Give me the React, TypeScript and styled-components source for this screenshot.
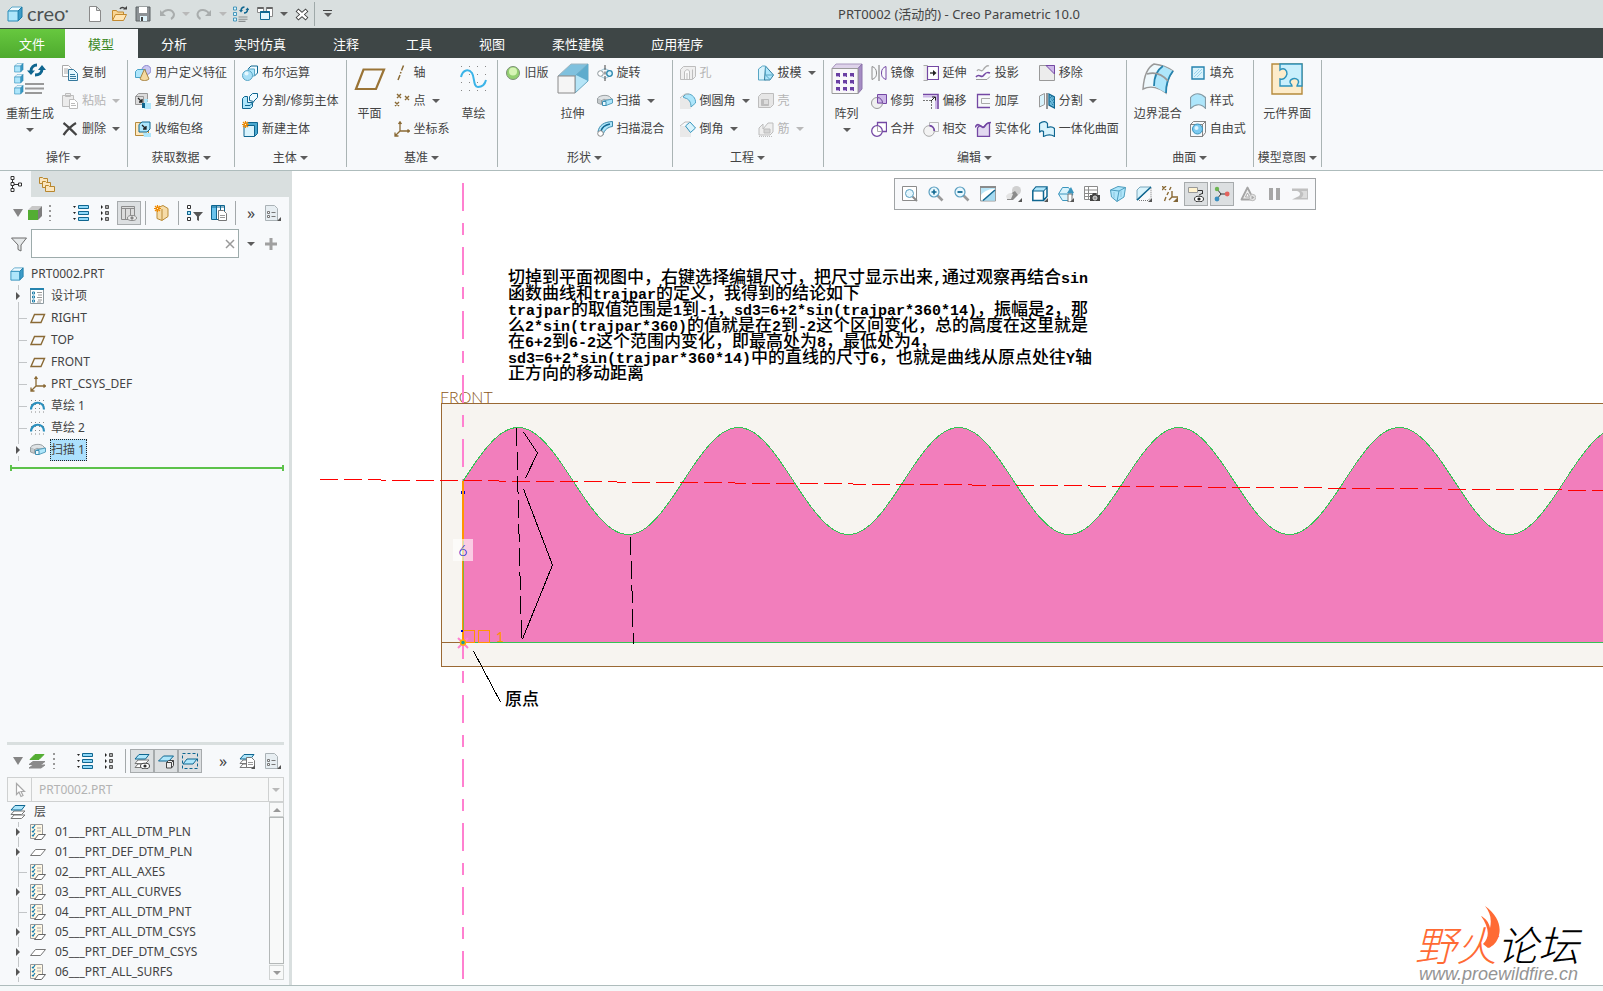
import React from 'react';
import styled, { createGlobalStyle } from 'styled-components';

const uiFont = '"Noto Sans", "Noto Sans CJK SC", sans-serif';
const c = {
  text: '#434343',
  muted: '#b4b4b4',
  frame: '#d9dfdf',
  panel: '#f7f9fb',
  line: '#aebcbc',
  navy: '#0f6690',
  sky: '#aee6fb',
  pale: '#d9f3fc',
  grey: '#8c8c8c',
  brown: '#8a6a35',
  purple: '#7448a4',
  lilac: '#cdb8e8',
};

const GlobalStyle = createGlobalStyle`
  * { box-sizing: border-box; }
  body { margin: 0; font: 12px/16px ${uiFont}; color: ${c.text}; overflow: hidden; }
  button, input, select { font: inherit; color: inherit; }
  button { background: none; border: 0; padding: 0; margin: 0; white-space: nowrap; }
  ul { list-style: none; margin: 0; padding: 0; }
  svg { display: block; flex: none; }
`;

/* ---------- icons ---------- */

const Corner = () => <path d="M16 12v4h-4z" fill="#555" />;

const Box = ({ x = 0, y = 0, s = 1 }: { x?: number; y?: number; s?: number }) => (
  <g transform={`translate(${x} ${y}) scale(${s})`} strokeLinejoin="round">
    <path d="M1 5l4-4h10l-4 4z" fill="#eefaff" stroke="#5aa6c8" />
    <path d="M11 5l4-4v10l-4 4z" fill="#3d9cc8" stroke="#1b7aa6" />
    <path d="M1 5h10v10H1z" fill={c.sky} stroke="#2a8cb8" />
  </g>
);

const Layers = ({ top = c.sky, edge = c.navy, low = '#777' }: { top?: string; edge?: string; low?: string }) => (
  <g strokeLinejoin="round">
    <path d="M1 14.500l3-3.500h11l-3.500 3.500z" fill="#fff" stroke={low} />
    <path d="M1 10.500l3-3.500h11l-3.500 3.500z" fill="#fff" stroke={low} />
    <path d="M1 6l4-4.500h10L11.500 6z" fill={top} stroke={edge} />
  </g>
);

const Page = ({ x = 0, y = 0 }: { x?: number; y?: number }) => (
  <g transform={`translate(${x} ${y})`}>
    <path d="M.5.500h5l3 3v7h-8z" fill="#fff" stroke="#777" />
    <path d="M2 5.500h5M2 7.500h5" stroke="#999" />
  </g>
);

const Sparkle = () => (
  <g stroke="#f08a00" strokeWidth="1.200">
    <path d="M3.500 0v7M0 3.500h7M1 1l5 5M6 1L1 6" />
    <circle cx="3.500" cy="3.500" r="1.200" fill="#fff" />
  </g>
);

const Lens = ({ children }: { children?: React.ReactNode }) => (
  <g>
    <path d="M9.500 9.500l5 5" stroke="#9a9a9a" strokeWidth="2.600" />
    <circle cx="6" cy="6" r="5" fill="#e9f8fe" stroke="#5b9fc0" strokeWidth="1.200" />
    {children}
  </g>
);

const icons: Record<string, React.ReactNode> = {
  app: <Box />,
  blank: <path d="M2.500.500h7l4 4v11h-11zM9.500.500v4h4" fill="#fff" stroke="#8a8a8a" />,
  open: (
    <g>
      <path d="M1.500 14V4.500h4l1 1.500h6v3" fill="#f9d593" stroke="#c28a30" />
      <path d="M1.500 14.500l3-6h11l-3 6z" fill="#ffe5b4" stroke="#c28a30" />
      <path d="M9 3c1-2 4-2 5 0" fill="none" stroke="#444" strokeWidth="1.400" />
      <path d="M12 3.500h4V0z" fill="#444" />
    </g>
  ),
  save: (
    <g>
      <path d="M1 1h14v14H1z" fill="#8d9296" stroke="#5d6265" />
      <path d="M4 1h8v6H4z" fill="#fff" />
      <path d="M5 10h7v5H5z" fill="#ddf3fb" />
      <path d="M6 11h2v4H6z" fill="#444" />
    </g>
  ),
  undo: (
    <g fill="none" stroke="#a9adad" strokeWidth="2">
      <path d="M2 9c3-6 11-7 13-1 0 3-1 4-3 5" />
      <path d="M1 4v6h6z" fill="#a9adad" stroke="none" />
    </g>
  ),
  redo: (
    <g fill="none" stroke="#a9adad" strokeWidth="2">
      <path d="M14 9C11 3 3 2 1.500 8c0 3 1 4 3 5" />
      <path d="M15 4v6H9z" fill="#a9adad" stroke="none" />
    </g>
  ),
  regen: (
    <g>
      <g fill={c.pale} stroke="#2583ae" strokeWidth=".8">
        <path d="M.5 1h3v3h-3zM.5 6.500h3v3h-3zM.5 12h3v3h-3z" />
      </g>
      <path d="M5.500 11h9M5.500 13.200h9M5.500 15.400h7" stroke="#8a8f90" strokeWidth="1.100" />
      <path d="M8 4.200C8.300 2 10 1 11.500 1M14.500 4c-.2 2-1.800 3-3.500 3" fill="none" stroke={c.navy} strokeWidth="1.500" />
      <path d="M6 4h4L8 6.500zM12.500 4h4l-2-2.500z" fill={c.navy} />
    </g>
  ),
  windows: (
    <g>
      <path d="M.5 1.500h6v5h-6zM9.500 1.500h6v9h-6z" fill="#fff" stroke="#888" />
      <path d="M.5 2h6M9.500 2h6" stroke="#666" strokeWidth="2" />
      <path d="M3.500 5.500h9v8h-9z" fill="#e3f5fd" stroke={c.navy} />
      <path d="M3.500 6h9" stroke={c.navy} strokeWidth="2" />
    </g>
  ),
  closeWin: (
    <g fill="none">
      <path d="M3 4l10 9M13 4L3 13" stroke="#3f3f3f" strokeWidth="4.200" />
      <path d="M3.600 4.600l8.800 7.800M12.400 4.600l-8.800 7.800" stroke="#fff" strokeWidth="2.400" />
    </g>
  ),
  copy: (
    <g>
      <path d="M.5.500h6l3 3v8h-9zM2 4h4M2 6h4M2 8h4" fill="#fff" stroke="#aaa" />
      <path d="M6.500 4.500h5l4 4v7h-9z" fill="#e5f7fe" stroke="#34789c" />
      <path d="M8 9.500h5M8 11.500h6M8 13.500h6" stroke="#34789c" />
    </g>
  ),
  paste: (
    <g stroke="#bcbcbc">
      <path d="M.5 2.500h11v11H.5zM3.500.500h5v3h-5z" fill="#ececec" />
      <path d="M7.500 6.500h5l3 3v6h-8zM9 10.500h4M9 12.500h5" fill="#fff" />
    </g>
  ),
  del: <path d="M1.500 2c4 3 8 7 13 12M14 2C9 5 5 9 1.500 14" fill="none" stroke="#444" strokeWidth="2.200" />,
  udf: (
    <g>
      <circle cx="11.500" cy="5" r="4.500" fill="#c9c6f2" stroke="#8d88cd" />
      <path d="M.5 6.500l2-2h8v6l-2 2h-8z" fill={c.sky} stroke="#4aa3c8" />
      <path d="M9.500 4l4.500 10c-2 2-7 2-9 0z" fill="#f5d9a0" stroke="#a88544" />
    </g>
  ),
  copyGeom: (
    <g>
      <path d="M.5 3.500l3-3h9v8l-3 3h-9z" fill="#dcdcdc" stroke="#999" />
      <path d="M.5 3.500h8v11" fill="none" stroke="#999" />
      <path d="M3 5l4 4M7 6v3H4" fill="none" stroke="#222" strokeWidth="1.300" />
      <path d="M9 6h4l-1 4h4v6h-7l1-4z" fill={c.sky} />
      <path d="M7 10h3v5H7z" fill={c.navy} />
    </g>
  ),
  shrink: (
    <g>
      <path d="M.5 1.500h13v13H.5z" fill="#ffe9bf" stroke="#b58a3d" />
      <path d="M4 3.500l3-2.500h8v7l-3 3H4z" fill={c.sky} stroke={c.navy} />
      <path d="M7 4l4 4M11 5v3H8" fill="none" stroke="#222" strokeWidth="1.300" />
      <path d="M8 12h8v4H9z" fill={c.sky} />
    </g>
  ),
  boolean: (
    <g>
      <path d="M6 4l3-3h6.500v7l-3 3" fill="#eefaff" stroke={c.navy} />
      <path d="M6 4h6.500v7H6z" fill={c.sky} stroke="#58a6c6" />
      <circle cx="5.500" cy="10.500" r="5" fill="#a8dff6" stroke="#58a6c6" />
      <circle cx="4.500" cy="8.500" r="2" fill="#e6f8fe" />
    </g>
  ),
  splitBody: (
    <g stroke={c.navy} strokeLinejoin="round">
      <path d="M.5 5.500l2-2h3v6h5v4l-2 2h-8z" fill={c.sky} />
      <path d="M7.500 7.500v-4l3-3h5v4l-4 4z" fill="#eefaff" />
      <path d="M3 12.500h5l4-4" fill="none" />
    </g>
  ),
  newBody: (
    <g>
      <path d="M2 4.500l3-3h10.500v11l-3 3" fill="#4ba8cf" stroke={c.navy} />
      <path d="M2 4.500h10.500v11H2z" fill="#d9f3fc" stroke={c.navy} />
      <Sparkle />
    </g>
  ),
  plane: <path d="M4.500 4.500h10l-3.500 8H1z" fill="none" stroke={c.brown} strokeWidth="1.400" />,
  axis: <path d="M9.500.500l-2 5M7 7l-.6 1.500M6 10l-2 5" stroke={c.brown} strokeWidth="1.500" />,
  points: <path d="M3 1l4 4M7 1L3 5M11 3l4 4M15 3l-4 4M1 9l4 4M5 9l-4 4" stroke={c.brown} strokeWidth="1.400" />,
  csys: (
    <g fill="none" stroke={c.brown} strokeWidth="1.300">
      <path d="M6 1v9h9M6 10l-4.500 4.500M4.500 3L6 .8 7.500 3M13.500 8.500l2 1.500-2 1.500M1 11.500V15h3.500" />
    </g>
  ),
  legacy: (
    <g>
      <circle cx="8" cy="8" r="6.500" fill="#93d070" stroke="#7d8f77" />
      <circle cx="8" cy="6.500" r="4" fill="#d6f4b5" />
    </g>
  ),
  revolve: (
    <g>
      <circle cx="3.500" cy="8.500" r="2.800" fill="#fff" stroke="#8b9599" />
      <path d="M4 5.500l4-2 4 2M4 11.500l4 2 4-2" fill="none" stroke="#9cc4d6" />
      <circle cx="12.500" cy="8.500" r="2.800" fill={c.pale} stroke="#2b87ad" strokeWidth="1.300" />
      <path d="M8 0v5M8 6.500v3M8 11v5" stroke="#444" />
    </g>
  ),
  sweep: (
    <g strokeLinejoin="round">
      <path d="M.5 6c0-3 8-5 12-2.500L15 6l-5 1c-2-1-5-1-5 1z" fill="#dfe3e5" stroke="#9aa0a3" />
      <path d="M.5 6v4l4 1.500V7" fill="#c5cacc" stroke="#9aa0a3" />
      <path d="M6 8l9.500-2v4L9 12.500z" fill={c.sky} stroke="#57a0be" />
      <path d="M5.500 8.500H9v4H5.500z" fill="#ecf9fe" stroke="#3d8fb3" />
    </g>
  ),
  sweepBlend: (
    <g>
      <path d="M1 11C2 4 7 1 15.500.500v5C11 6 7 9 6 14z" fill={c.sky} stroke="#3a89ab" />
      <path d="M4 10c1-4 4-6 9-7" fill="none" stroke={c.navy} strokeWidth="1.500" />
      <circle cx="3.500" cy="12.500" r="2.800" fill="#fff" stroke="#888" />
    </g>
  ),
  hole: (
    <g stroke="#bdbdbd">
      <path d="M.5 4.500l3-3h12v10l-3 3H.5z" fill="#efefef" />
      <path d="M4.500 14V7c1-3 5-3 5 0v7M7 14V8M12.500 14V4.500" fill="#fafafa" />
    </g>
  ),
  round: (
    <g>
      <path d="M0 5h11v11H0z" fill="#e9e9e9" />
      <path d="M5 2c1-1 2-1 3-1 4 0 8 4 7.500 9L11 14c0-5-2-8-6-9L3 4z" fill={c.sky} stroke="#54a4c4" />
      <path d="M0 5l5-4h4" fill="none" stroke="#bbb" />
    </g>
  ),
  chamfer: (
    <g>
      <path d="M0 5h11v11H0z" fill="#e9e9e9" />
      <path d="M5.500 5L10 1l5.500 6-5 4.500z" fill={c.pale} stroke="#3294bd" />
      <path d="M0 5l5-4h5" fill="none" stroke="#bbb" />
    </g>
  ),
  draft: (
    <g stroke="#58a6c4">
      <path d="M.5 4l4-3h3v14H.5z" fill={c.pale} />
      <path d="M7.500 1l8 9-3.500 5H6.500z" fill={c.sky} stroke="#347f9f" />
      <path d="M7.500 1v9l5 5M7.500 10h8" fill="none" />
    </g>
  ),
  shell: (
    <g stroke="#bdbdbd">
      <path d="M.5 3.500l3-3h12v11l-3 3H.5z" fill="#e6e6e6" />
      <path d="M3.500 6.500h7v6h-7z" fill="#bdbdbd" />
      <path d="M6 7h4v4H6z" fill="#ddd" stroke="none" />
    </g>
  ),
  rib: (
    <g stroke="#bdbdbd">
      <path d="M1 14V7l4-4v5l5-6h5v9l-3 3z" fill="#efefef" />
      <path d="M6 8h6v4H6z" fill="#d4d4d4" />
      <path d="M1 15.500h13" strokeDasharray="1 1" />
    </g>
  ),
  mirror: (
    <g fill="none">
      <path d="M1 14.500V1.500c3 1 4.500 3 4.500 6.500s-1 5-4.500 6.500z" stroke="#8c8c8c" />
      <path d="M8 0v16" stroke="#777" />
      <path d="M15 14.500V1.500c-3 1-4.500 3-4.500 6.500s1 5 4.500 6.500z" stroke={c.purple} />
    </g>
  ),
  trim: (
    <g>
      <path d="M6.500 1.500h9v9h-9z" fill={c.lilac} stroke={c.purple} />
      <circle cx="6" cy="10" r="5.500" fill="#eee" fillOpacity=".8" stroke="#999" />
      <path d="M6.500 4.500a5.500 5.500 0 015 5.500h-5z" fill={c.lilac} stroke={c.purple} />
    </g>
  ),
  merge: (
    <g fill="#fff">
      <path d="M6.500 1.500h9v9h-9z" stroke={c.purple} strokeWidth="1.300" />
      <circle cx="6" cy="10" r="5.300" stroke={c.purple} strokeWidth="1.300" />
      <path d="M6.500 5v5.500H11" fill="none" stroke="#aaa" />
    </g>
  ),
  extend: (
    <g>
      <path d="M.5.500h4v15h-4" fill="#eee" stroke="#aaa" />
      <path d="M4.500 1.500h11v13h-11z" fill="#fff" stroke={c.purple} strokeWidth="1.200" />
      <path d="M7 8h4" stroke="#222" strokeWidth="1.300" />
      <path d="M10 5v6l3.500-3z" fill="#222" />
    </g>
  ),
  offset: (
    <g>
      <path d="M0 1.500h15V16" fill="none" stroke={c.purple} strokeWidth="1.600" />
      <path d="M0 3.500h13V16" fill="none" stroke={c.lilac} strokeWidth="2" />
      <path d="M0 7.500h8.500V16" fill="none" stroke="#777" strokeDasharray="2 1" />
      <path d="M8 8l4-4M9 4h3.500v3.500" fill="none" stroke="#222" />
    </g>
  ),
  intersect: (
    <g fill="none">
      <path d="M6.500 1.500h9v9h-9z" stroke="#bbb" />
      <circle cx="6" cy="10" r="5.300" fill="#f3f3f3" stroke="#aaa" />
      <path d="M6.500 4.700A5.300 5.300 0 0111.300 10" stroke={c.purple} strokeWidth="1.800" />
    </g>
  ),
  project: (
    <g fill="none">
      <path d="M2 6c2-4 4 2 6-1s4-5 6-4" stroke="#aaa" strokeWidth="1.300" />
      <path d="M1 12c3-4 5 1 7-1s3-5 7-3" stroke={c.purple} strokeWidth="1.600" />
      <path d="M1 14.500h11l3-3" stroke="#999" />
    </g>
  ),
  thicken: (
    <g fill="none">
      <path d="M15 1.500H2.500v13H15" stroke={c.purple} strokeWidth="1.300" />
      <path d="M15 5.500H6.500v5H15" stroke="#aaa" />
    </g>
  ),
  solidify: (
    <g>
      <path d="M2.500 15.500V7c3-5 4 0 6-1 2 0 2-5 6-4v13.500z" fill="#e2d9f1" stroke={c.purple} strokeWidth="1.300" />
      <path d="M0 6.500c3-6 5-1 8 0 2 0 2-5 8-5" fill="none" stroke={c.purple} strokeWidth="1.600" />
    </g>
  ),
  remove: (
    <g>
      <path d="M.5.500h15v15H.5z" fill="#ececec" stroke="#999" />
      <path d="M7 .5h8.500V9z" fill={c.lilac} stroke={c.purple} />
    </g>
  ),
  divide: (
    <g>
      <path d="M.5 3l5-2.500v11L.5 14z" fill={c.pale} stroke="#999" />
      <path d="M8 0v16" stroke="#333" />
      <path d="M10 1l5.500 3v11L10 12z" fill="#71bfe0" stroke={c.navy} strokeWidth="1.300" />
      <path d="M11 4l4 6M11 8l3 4M12 3l3 4" stroke={c.navy} strokeDasharray="1 1" />
    </g>
  ),
  unify: <path d="M.5 2.500c4-3 7-2 8 0v4c3-1 5-1 7 1v8c-3-2-7-2-11 0v-5c-1-1-3-1-4 1z" fill={c.pale} stroke={c.navy} strokeWidth="1.200" />,
  fill: (
    <g>
      <path d="M2 2h12v12H2z" fill={c.pale} stroke="#2583ae" strokeWidth="1.400" />
      <path d="M4 9l5-5M4 12l8-8M7 12l5-5" stroke="#9ad4ec" />
    </g>
  ),
  style: <path d="M.5 4.500c4-5 10-5 15 0v11c-4-5-10-5-15 0z" fill={c.sky} stroke="#859ba5" strokeWidth="1.200" />,
  freestyle: (
    <g>
      <path d="M.5 3.500l3-3h12v11l-3 4H.5zM.5 3.500h12v12M12.500 3.500l3-3" fill="none" stroke="#666" strokeWidth=".8" />
      <circle cx="7.500" cy="8" r="5" fill="#7ccaf0" stroke="#3894bd" />
      <circle cx="6.500" cy="7" r="2" fill="#def5fe" />
    </g>
  ),
  treeTab: (
    <g fill="#fff" stroke="#333">
      <path d="M4.500 4v2M4.500 10v2M6 8.500h5" />
      <path d="M3 .5h3v3H3zM3 6.500h3v3H3zM3 12.500h3v3H3zM10.500 7h3v3h-3z" />
    </g>
  ),
  folders: (
    <g fill="#fbe5bd" stroke="#b7862e">
      <path d="M.5 1.500h3l1 1h4v5h-8z" />
      <path d="M3.500 5.500h3l1 1h4v5h-8z" />
      <path d="M6.500 9.500h3l1 1h5v5h-9z" />
    </g>
  ),
  greenCube: (
    <g>
      <path d="M1 5l4-4h10l-4 4z" fill="#c8c8c8" />
      <path d="M11 5l4-4v10l-4 4z" fill="#7d7d7d" />
      <path d="M1 5h10v10H1z" fill="#53ad33" />
    </g>
  ),
  greenLayers: (
    <g>
      <path d="M0 15l4-3h12l-4 3zM0 11.500l4-3h12l-4 3z" fill="#8a8a8a" stroke="#8a8a8a" />
      <path d="M1 6.500l5-5h9l-5 5z" fill="#53ad33" stroke="#53ad33" />
    </g>
  ),
  listExpand: (
    <g fill="#8fd8f8" stroke={c.navy}>
      <path d="M5.500.500h10v3h-10zM5.500 6.500h10v3h-10zM5.500 12.500h10v3h-10z" />
      <path d="M0 1h3L1.500 3zM0 7h3L1.500 9zM0 13h3l-1.500 2z" fill="#222" stroke="none" />
    </g>
  ),
  listCollapse: (
    <g fill="#aaa" stroke="#555">
      <path d="M8.500.500h3v3h-3zM8.500 6.500h3v3h-3zM8.500 12.500h3v3h-3z" />
      <path d="M4 0v4l2-2zM4 6v4l2-2zM4 12v4l2-2z" fill="#222" stroke="none" />
    </g>
  ),
  columnsEye: (
    <g fill="none" stroke="#8b8b8b">
      <path d="M.5 1.500h13v13H.5zM.5 3.500h13M4.500 3.500v11M9.500 3.500v11" fill="#dcdcdc" />
      <ellipse cx="11" cy="13" rx="4.500" ry="2.500" fill="#eee" />
      <circle cx="11" cy="13" r="1.200" fill="#777" />
    </g>
  ),
  newGroup: (
    <g>
      <path d="M3 3l6-2.500 5 3v8L8 15.500l-5-2z" fill="#f6dca8" stroke="#b98a35" />
      <path d="M8 4v11" stroke="#b98a35" />
      <Sparkle />
    </g>
  ),
  treeFilter: (
    <g>
      <path d="M.5.500h3v3h-3zM.5 6.500h3v3h-3zM.5 12.500h3v3h-3z" fill="#fff" stroke="#333" />
      <path d="M.5 6.500h3v3h-3z" fill={c.sky} stroke={c.navy} />
      <path d="M6 7h10l-4 4.500V16l-2-1v-3.500z" fill="#555" />
    </g>
  ),
  columnsPage: (
    <g>
      <path d="M.5.500h13v14H.5z" fill="#fff" stroke={c.navy} />
      <path d="M1 1h4v13H1z" fill="#6ac3ec" />
      <path d="M0 2h14M5.500 1v13M9.500 1v6" stroke={c.navy} />
      <Page x={7} y={5} />
    </g>
  ),
  settings: (
    <g>
      <path d="M.5.500h9l3 3v12H.5z" fill="#e7eef2" stroke="#aab2b6" />
      <path d="M2.500 6.500h2v2h-2zM2.500 10.500h2v2h-2z" fill="#fff" stroke="#777" />
      <path d="M6.500 7.500h4M6.500 11.500h4" stroke="#777" />
      <Corner />
    </g>
  ),
  layersEye: (
    <g>
      <Layers />
      <ellipse cx="11" cy="13" rx="4.500" ry="2.800" fill="#fff" stroke="#444" />
      <circle cx="11" cy="13" r="1.600" fill="#333" />
    </g>
  ),
  layerCube: (
    <g>
      <path d="M.5 8l5-5h10L11 8z" fill={c.sky} stroke={c.navy} />
      <path d="M8.500 9.500l2-2h5v5l-2 2.500h-5zM8.500 9.500h5v5.500M13.500 9.500l2-2" fill="#eee" stroke="#444" />
    </g>
  ),
  layerSel: (
    <g>
      <path d="M.5.500h15v15H.5z" fill="none" stroke={c.navy} strokeDasharray="3 2" />
      <path d="M1 11l4-5h10l-4 5z" fill={c.sky} stroke={c.navy} />
    </g>
  ),
  layersPage: (
    <g>
      <Layers />
      <Page x={7} y={4} />
      <Corner />
    </g>
  ),
  layers: <Layers />,
  cursor: <path d="M4.500 1.500v11l2.500-2.500 2 4.500 2-1-2-4h3.500z" fill="#fff" stroke="#a8a8a8" strokeWidth="1.200" />,
  funnel: <path d="M.5 2h15L10 9v6l-3-1.500V9z" fill="#e6e9ea" stroke="#6d6d6d" />,
  design: (
    <g>
      <path d="M.5.500h13v15H.5z" fill="#fff" stroke="#8f9ba0" />
      <path d="M0 1h14" stroke="#2583ae" strokeWidth="2" />
      <path d="M2.500 4h2v2h-2zM2.500 8h2v2h-2zM2.500 12h2v2h-2z" fill="#fff" stroke="#2583ae" />
      <path d="M7 4.500h5M8 7h4M7 9.500h5M8 12h4M7 14h4" stroke="#999" />
    </g>
  ),
  sketchItem: (
    <g>
      <path d="M1 2.500h13M1 6.500h13M1 10.500h13M1 14h13" stroke="#888" strokeDasharray="1 3" />
      <path d="M1 11.500C1 3 14 2 14 11.500" fill="none" stroke="#2a8fbd" strokeWidth="2.200" />
    </g>
  ),
  layerRule: (
    <g>
      <path d="M.5.500h12v14H.5z" fill="#fff8e4" stroke="#999" />
      <path d="M2 3l1 1 2-3M2 7l1 1 2-3M2 11l1 1 2-3" fill="none" stroke="#1a7fb0" strokeWidth="1.200" />
      <path d="M7 4h4M7 7h4" stroke="#aaa" />
      <path d="M4.500 15.500l4-5h7l-4 5z" fill="#fff" stroke="#666" />
    </g>
  ),
  layerFlat: <path d="M.5 11.500l5-6h10l-5 6z" fill="#fff" stroke="#777" />,
  zoomFit: (
    <g>
      <path d="M.5.500h14v14H.5z" fill="#fff" stroke="#8b8b8b" />
      <path d="M10.500 10.500l4.500 4.500" stroke="#8b8b8b" strokeWidth="2" />
      <circle cx="7.500" cy="7.500" r="4" fill="#e4f6fd" stroke="#5b9fc0" />
    </g>
  ),
  zoomIn: (
    <Lens>
      <path d="M6 3.500v5M3.500 6h5" stroke={c.navy} strokeWidth="1.600" />
    </Lens>
  ),
  zoomOut: (
    <Lens>
      <path d="M3.500 6h5" stroke={c.navy} strokeWidth="1.800" />
    </Lens>
  ),
  repaint: (
    <g>
      <path d="M.5 1h15v14H.5z" fill="#b9e6f8" stroke="#9a9a9a" />
      <path d="M1 9c4-5 9-6 14-6v11H1z" fill="#fff" />
      <path d="M0 1h16" stroke="#8a8a8a" strokeWidth="2" />
      <path d="M3 14.500L15 4v10.500z" fill="#a5daf1" />
      <path d="M3 14.500L15 4" stroke={c.navy} strokeWidth="1.500" />
    </g>
  ),
  shading: (
    <g>
      <circle cx="10.500" cy="4.500" r="4.500" fill="#d0d0d0" />
      <path d="M1 14c0-4 3-3 3-6l5-3 3 4-5 5z" fill="#8b8b8b" />
      <path d="M0 10c2-3 5-4 7-2l-2 5H1z" fill="#e4e4e4" />
      <Corner />
    </g>
  ),
  display: (
    <g>
      <path d="M.8 4.800L4 1h11v9.500l-3.500 4H.8zM.8 4.800h10.700v9.700M11.500 4.800L15 1" fill="#fff" stroke={c.navy} strokeWidth="1.500" />
      <path d="M4 1.500h10.500l-3 3H1.500z" fill={c.sky} />
      <Corner />
    </g>
  ),
  savedViews: (
    <g>
      <path d="M.5 8l4-6.500h6L15 8l-4.500 6.500h-6z" fill={c.pale} stroke="#3b95bd" />
      <path d="M9 7l4-6 3 6z" fill="#3b95bd" />
      <path d="M1 8h14" stroke="#3b95bd" />
      <path d="M10 8h4v8h-4z" fill="#fff" stroke="#777" />
      <Corner />
    </g>
  ),
  viewManager: (
    <g>
      <path d="M.5.500h13v13H.5zM.5 4h13M.5 7.500h13M.5 10.500h13M4.500.500v13" fill="#fff" stroke="#8a8a8a" />
      <path d="M6 9h2l1-2h3l1 2h3v6H6z" fill="#444" />
      <circle cx="11" cy="12" r="2" fill="#999" stroke="#ddd" />
    </g>
  ),
  perspective: (
    <g stroke="#4d9cbd">
      <path d="M.5 4L8 .5l7.500 1L14 11l-7 4.500L1.500 11z" fill={c.sky} />
      <path d="M.5 4L9 5l6.500-3.500M9 5l-2 10.500" fill="none" />
      <path d="M4 6v6M11 5v6" stroke="#8cc3db" />
    </g>
  ),
  section: (
    <g>
      <path d="M1 14V4l3-3h11L2 14z" fill={c.pale} stroke="#7aa7bb" />
      <path d="M3 14.500h9l3-3V2" fill="none" stroke="#777" strokeDasharray="1 1" />
      <path d="M1 14L15 1" stroke={c.navy} strokeWidth="1.600" />
      <Corner />
    </g>
  ),
  datum: (
    <g stroke={c.brown} fill="none" strokeWidth="1.400">
      <path d="M0 0l4 4M4 0L0 4M9 1L7.500 4M6.500 6L5 9M4 11l-1.500 4M10 5v6h6M10 11l-3 3" />
      <Corner />
    </g>
  ),
  annotation: (
    <g>
      <path d="M.5 1.500h9v5h-9z" fill="#fff3d0" stroke="#999" />
      <path d="M10 4.500h4.500V8M11 9l3-1.500" fill="none" stroke="#333" />
      <ellipse cx="11" cy="13" rx="4.500" ry="2.800" fill="#fff" stroke="#333" />
      <circle cx="11" cy="13" r="1.600" fill="#222" />
    </g>
  ),
  spin: (
    <g>
      <path d="M3 3l4 5h6M7 8l-4 5" fill="none" stroke="#333" />
      <circle cx="3" cy="3" r="2.200" fill="#6cb552" />
      <circle cx="13.200" cy="8" r="2.400" fill="#e4635d" />
      <circle cx="3" cy="13" r="2.400" fill="#3b8fc0" />
    </g>
  ),
  simulate: (
    <g>
      <path d="M7.500 1.500l6 12h-12z" fill="#eee" stroke="#a5a5a5" strokeWidth="1.800" strokeLinejoin="round" />
      <path d="M7.500 7l2 4h-4z" fill="#fff" stroke="#aaa" />
      <circle cx="12.500" cy="11.500" r="3.200" fill="#e4e4e4" stroke="#bbb" />
      <path d="M11.500 9.500v4l3-2z" fill="#aaa" />
    </g>
  ),
  pause: <path d="M3 2h4v12H3zM10 2h4v12h-4z" fill="#a6a6a6" />,
  flow: (
    <g>
      <path d="M0 2.500h16v11H0l5-2.500c4-1 4-5 0-6H0z" fill="#c0c0c0" />
      <path d="M9 5h6v7H9c3-3 3-5 0-7z" fill="#dcdcdc" />
    </g>
  ),
  /* large ribbon icons are drawn on a 32px grid */
  bigRegen: (
    <g>
      <Box x={0} y={0} s={0.6} />
      <Box x={0} y={11} s={0.6} />
      <Box x={0} y={22} s={0.6} />
      <path d="M11 21h19M11 25.500h19M11 30h17" stroke="#999" strokeWidth="1.800" />
      <path d="M17 8c0-4 3-6 6-6M28 6c0 4-3 6-7 6" fill="none" stroke={c.navy} strokeWidth="3" />
      <path d="M13 7.500h8L17 12zM24 7h8l-4-5z" fill={c.navy} />
    </g>
  ),
  bigPlane: <path d="M9.500 6.500H30l-8 19.500H2z" fill="none" stroke="#9a7436" strokeWidth="2.200" />,
  bigSketch: (
    <g>
      <path d="M3 3.500h26M3 11.500h26M3 19.500h26M3 27.500h26" stroke="#888" strokeDasharray="1 7" />
      <path d="M3 14C5 6 11 6 14 10c3 5 1 14 6 14 5 0 7-3 8-7" fill="none" stroke="#3bb4e8" strokeWidth="2" />
    </g>
  ),
  bigExtrude: (
    <g>
      <path d="M1 13L14 1h17L18 13z" fill="#7fc1de" stroke="#9fb6c0" />
      <path d="M18 13L31 1v17L18 30z" fill="#b6e5f7" stroke="#6caac4" />
      <path d="M31 1v17L19 12z" fill="#5eaccd" />
      <path d="M1 13h17v17H1z" fill="#f5f5f5" stroke="#8a8a8a" />
    </g>
  ),
  bigPattern: (
    <g>
      <path d="M1 5.500L5 1h26l-4 4.500z" fill="#ded3ea" stroke="#a796bd" />
      <path d="M27 5.500L31 1v25l-4 4.500z" fill="#a58cc4" stroke="#8c75ab" />
      <path d="M1 5.500h26v25H1z" fill="#f8f7f9" stroke="#9a9a9a" />
      <path d="M5 10h4v4H5zM12 10h4v4h-4zM19 10h4v4h-4zM5 17h4v4H5zM12 17h4v4h-4zM19 17h4v4h-4zM5 24h4v4H5zM12 24h4v4h-4zM19 24h4v4h-4z" fill="#6a3fa3" />
      <path d="M5 13h3v1H5zM12 13h3v1h-3zM19 13h3v1h-3zM5 20h3v1H5zM12 20h3v1h-3zM19 20h3v1h-3zM5 27h3v1H5zM12 27h3v1h-3zM19 27h3v1h-3z" fill="#c3aee0" />
    </g>
  ),
  bigBoundary: (
    <g fill="none">
      <path d="M1 26C2 12 6 4 12 1c7 1 12 2 19 7-4 5-7 12-7 22-6-5-15-8-23-4z" fill="#eef8fc" stroke="#999" strokeWidth="1.400" />
      <path d="M12 23C12 14 15 7 21 3l10 5c-4 5-7 12-7 22z" fill={c.sky} />
      <path d="M31 8c-4 5-7 12-7 22M12 23C12 14 15 7 21 3" stroke="#2583ae" strokeWidth="1.800" />
      <path d="M5 11c7-2 15 0 21 7" stroke="#999" strokeWidth="1.600" />
    </g>
  ),
  bigComponent: (
    <g>
      <path d="M1 1h30v30H1z" fill="#fdeccb" stroke="#b58a3d" strokeWidth="1.400" />
      <path
        d="M9 1h22v22h-5c0-2 3-3 1-6-3-3-8-1-8 2 0 2 2 2 2 4H9v-7c3 1 6-1 7-5 0-4-3-7-7-4z"
        fill="#c9effc"
        stroke="#2d93bd"
        strokeWidth="1.400"
      />
    </g>
  ),
};

const Icon = ({ name, size = 16 }: { name: string; size?: number }) => (
  <svg width={size} height={size} viewBox={size === 32 ? '0 0 32 32' : '0 0 16 16'} aria-hidden="true">
    {icons[name]}
  </svg>
);

const Caret = styled.span<{ $muted?: boolean }>`
  flex: none;
  border: 4px solid transparent;
  border-top-color: ${(p) => (p.$muted ? '#b9b9b9' : '#5c5c5c')};
  border-bottom-width: 0;
`;

/* ---------- frame ---------- */

const Shell = styled.div`
  min-height: 100vh;
  display: flex;
  flex-direction: column;
  background: ${c.panel};
`;

const TitleBar = styled.header`
  display: flex;
  align-items: center;
  height: 28px;
  padding-right: 25px;
  background: ${c.frame};
`;

const Brand = styled.div`
  display: flex;
  align-items: center;
  gap: 4px;
  width: 83px;
  padding-left: 7px;
  font: 20px/24px Lato, sans-serif;
  color: #4c5152;
  span { padding-bottom: 3px; }
  sup { font-size: 5px; line-height: 1px; vertical-align: 8px; }
`;

const QuickButton = styled.button<{ $slim?: boolean }>`
  display: flex;
  justify-content: center;
  align-items: center;
  width: ${(p) => (p.$slim ? 13 : 24)}px;
  height: 24px;
`;

const MoreButton = styled.button`
  display: flex;
  flex-direction: column;
  align-items: center;
  gap: 2px;
  width: 26px;
  height: 24px;
  padding-top: 8px;
  border-left: 1px solid #9fa9a9;
  &::before { content: ''; width: 9px; height: 1px; background: #444; }
`;

const WindowTitle = styled.h1`
  flex: 1;
  margin: 0;
  text-align: center;
  font: 13px/20px ${uiFont};
`;

const TabBar = styled.nav`
  display: flex;
  height: 30px;
  padding-top: 1px;
  background: #3e4646;
`;

const Tab = styled.button<{ $kind?: 'file' | 'active' }>`
  padding: ${(p) => (p.$kind === 'file' ? '0 20px 0 19px' : '0 24px 0 23px')};
  font-size: 13px;
  color: ${(p) => (p.$kind === 'active' ? '#3f8a28' : '#fff')};
  background: ${(p) =>
    p.$kind === 'file' ? 'linear-gradient(#67c83f, #4eaa2e)' : p.$kind === 'active' ? c.panel : 'transparent'};
`;

/* ---------- ribbon ---------- */

const Ribbon = styled.section`
  display: flex;
  height: 113px;
  padding: 2px 0 3px;
  border-bottom: 1px solid ${c.line};
`;

const GroupBody = styled.div`
  display: flex;
  justify-content: center;
  gap: 8px;
  padding: 0 7px;
`;

const GroupBox = styled.div`
  display: flex;
  flex-direction: column;
  justify-content: space-between;
  border-right: 1px solid #aab4b4;
  &:first-child ${GroupBody} { padding-left: 6px; }
`;

const GroupName = styled.button`
  display: flex;
  align-items: center;
  justify-content: center;
  gap: 3px;
  height: 20px;
  padding: 2px 4px 0;
`;

const Column = styled.div`
  display: flex;
  flex-direction: column;
  align-items: flex-start;
`;

const Small = styled.button`
  display: flex;
  align-items: center;
  gap: 4px;
  height: 28px;
  padding-bottom: 3px;
  &:disabled { color: ${c.muted}; }
  ${Caret} { margin-left: 2px; }
`;

const Large = styled.button`
  display: flex;
  flex-direction: column;
  align-items: center;
  min-width: 32px;
  padding-top: 3px;
  span:nth-of-type(1) { margin-top: 11px; }
  ${Caret} { margin-top: 6px; }
`;

type Cmd = [icon: string, label: string, caret?: boolean, disabled?: boolean];
type Block = { big: Cmd } | { col: Cmd[] };

const groups: { name: string; blocks: Block[] }[] = [
  {
    name: '操作',
    blocks: [
      { big: ['bigRegen', '重新生成', true] },
      { col: [['copy', '复制'], ['paste', '粘贴', true, true], ['del', '删除', true]] },
    ],
  },
  { name: '获取数据', blocks: [{ col: [['udf', '用户定义特征'], ['copyGeom', '复制几何'], ['shrink', '收缩包络']] }] },
  { name: '主体', blocks: [{ col: [['boolean', '布尔运算'], ['splitBody', '分割/修剪主体'], ['newBody', '新建主体']] }] },
  {
    name: '基准',
    blocks: [
      { big: ['bigPlane', '平面'] },
      { col: [['axis', '轴'], ['points', '点', true], ['csys', '坐标系']] },
      { big: ['bigSketch', '草绘'] },
    ],
  },
  {
    name: '形状',
    blocks: [
      { col: [['legacy', '旧版']] },
      { big: ['bigExtrude', '拉伸'] },
      { col: [['revolve', '旋转'], ['sweep', '扫描', true], ['sweepBlend', '扫描混合']] },
    ],
  },
  {
    name: '工程',
    blocks: [
      { col: [['hole', '孔', false, true], ['round', '倒圆角', true], ['chamfer', '倒角', true]] },
      { col: [['draft', '拔模', true], ['shell', '壳', false, true], ['rib', '筋', true, true]] },
    ],
  },
  {
    name: '编辑',
    blocks: [
      { big: ['bigPattern', '阵列', true] },
      { col: [['mirror', '镜像'], ['trim', '修剪'], ['merge', '合并']] },
      { col: [['extend', '延伸'], ['offset', '偏移'], ['intersect', '相交']] },
      { col: [['project', '投影'], ['thicken', '加厚'], ['solidify', '实体化']] },
      { col: [['remove', '移除'], ['divide', '分割', true], ['unify', '一体化曲面']] },
    ],
  },
  {
    name: '曲面',
    blocks: [{ big: ['bigBoundary', '边界混合'] }, { col: [['fill', '填充'], ['style', '样式'], ['freestyle', '自由式']] }],
  },
  { name: '模型意图', blocks: [{ big: ['bigComponent', '元件界面'] }] },
];

const RibbonGroup = ({ name, blocks }: { name: string; blocks: Block[] }) => (
  <GroupBox>
    <GroupBody>
      {blocks.map((b, i) =>
        'big' in b ? (
          <Large key={i}>
            <Icon name={b.big[0]} size={32} />
            <span>{b.big[1]}</span>
            {b.big[2] && <Caret />}
          </Large>
        ) : (
          <Column key={i}>
            {b.col.map(([icon, label, caret, disabled]) => (
              <Small key={label} disabled={disabled}>
                <Icon name={icon} />
                {label}
                {caret && <Caret $muted={disabled} />}
              </Small>
            ))}
          </Column>
        ),
      )}
    </GroupBody>
    <GroupName>
      {name}
      <Caret />
    </GroupName>
  </GroupBox>
);

/* ---------- side panel ---------- */

const Workspace = styled.main`
  flex: 1;
  display: flex;
  min-height: 0;
`;

const Side = styled.aside`
  flex: none;
  display: flex;
  flex-direction: column;
  width: 292px;
  border-right: 3px solid ${c.frame};
`;

const PanelTabs = styled.div`
  display: flex;
  height: 26px;
  background: ${c.frame};
`;

const PanelTab = styled.button<{ $active?: boolean }>`
  display: flex;
  align-items: center;
  justify-content: center;
  width: 31px;
  background: ${(p) => (p.$active ? c.panel : 'transparent')};
`;

const ToolRow = styled.div`
  display: flex;
  align-items: center;
  height: 32px;
  padding: 0 4px 0 10px;
`;

const Tool = styled.button<{ $on?: boolean; $w?: number }>`
  display: flex;
  align-items: center;
  justify-content: center;
  width: ${(p) => p.$w ?? 24}px;
  height: 24px;
  font-size: 16px;
  background: ${(p) => (p.$on ? '#dcdfe1' : 'none')};
  border: ${(p) => (p.$on ? '1px solid #a7abad' : '0')};
`;

const BigCaret = styled.span`
  border: 5px solid transparent;
  border-top: 8px solid #858585;
  border-bottom: 0;
`;

const Grip = styled.span`
  width: 2px;
  height: 16px;
  margin: 0 18px 0 4px;
  background: repeating-linear-gradient(#999 0 2px, transparent 2px 5px);
`;

const Rule = styled.span`
  width: 1px;
  height: 24px;
  margin: 0 4px;
  background: #a3a8aa;
`;

const Push = styled.span`
  flex: 1;
`;

const SearchRow = styled.div`
  display: flex;
  align-items: center;
  gap: 4px;
  height: 29px;
  padding: 0 10px 0 11px;
`;

const SearchBox = styled.div`
  display: flex;
  align-items: center;
  flex: 1;
  height: 29px;
  background: #fff;
  border: 1px solid #9dabab;
  input {
    flex: 1;
    min-width: 0;
    height: 25px;
    border: 0;
    padding: 0 6px;
    background: none;
    outline: 0;
  }
`;

const GlyphButton = styled.button`
  display: flex;
  align-items: center;
  justify-content: center;
  width: 16px;
  height: 16px;
`;

const TreeWrap = styled.div`
  padding-top: 5px;
`;

const Tree = styled.ul<{ $row: number }>`
  flex: 1;
  min-width: 0;
  li {
    display: flex;
    align-items: center;
    height: ${(p) => p.$row}px;
    padding-left: 10px;
  }
`;

const Root = styled.span<{ $gap: number }>`
  display: flex;
  align-items: center;
  gap: ${(p) => p.$gap}px;
`;

const NodeText = styled.span<{ $selected?: boolean; $gap: number }>`
  margin-left: ${(p) => p.$gap}px;
  padding: 2px 1px 2px 0;
  border: 1px dotted ${(p) => (p.$selected ? '#222' : 'transparent')};
  background: ${(p) => (p.$selected ? '#ace0fd' : 'transparent')};
`;

const Gutter = ({ h, parent }: { h: number; parent?: boolean }) => (
  <svg width="20" height={h} shapeRendering="crispEdges" aria-hidden="true">
    <path d={parent ? `M8.500 0v5M8.500 ${h - 5}v5` : `M8.500 0v${h}M8.500 ${h / 2 + 0.5}h8`} stroke="#c3c6c8" />
    {parent && <path d={`M6 ${h / 2 - 4}v8l4-4z`} fill="#555" shapeRendering="auto" />}
  </svg>
);

const InsertBar = styled.div`
  height: 6px;
  margin: 4px 5px 0 10px;
  border: solid #5cc24a;
  border-width: 0 2px;
  background: linear-gradient(#5cc24a, #5cc24a) center / 100% 2px no-repeat;
`;

const LayerPane = styled.section`
  margin-top: auto;
  padding-bottom: 3px;
`;

const Splitter = styled.div`
  height: 3px;
  margin: 0 5px 0 7px;
  background: ${c.frame};
`;

const Combo = styled.div`
  display: flex;
  align-items: center;
  height: 25px;
  margin: 0 5px 0 7px;
  border: 1px solid #cfd1d1;
  background: #f7f8f8;
  select {
    flex: 1;
    height: 23px;
    padding: 0 7px;
    border: solid #cfd1d1;
    border-width: 0 1px;
    background: none;
    color: #b3b3b3;
    opacity: 1;
    appearance: none;
  }
`;

const ComboCell = styled.span<{ $w: number }>`
  display: flex;
  justify-content: center;
  width: ${(p) => p.$w}px;
`;

const LayerList = styled.div`
  display: flex;
  padding-right: 5px;
`;

const ScrollTrack = styled.div`
  display: flex;
  flex-direction: column;
  width: 15px;
  height: 178px;
  background: #f0f2f2;
`;

const ScrollPart = styled.button<{ $thumb?: boolean; $up?: boolean }>`
  display: flex;
  align-items: center;
  justify-content: center;
  flex: ${(p) => (p.$thumb ? '1' : '0 0 15px')};
  margin-bottom: ${(p) => (p.$thumb ? 1 : 0)}px;
  border: 1px solid ${(p) => (p.$thumb ? '#b4b8b8' : '#d0d3d3')};
  background: #f8f9f9;
  ${Caret} { transform: ${(p) => (p.$up ? 'rotate(180deg)' : 'none')}; border-top-color: #999; }
`;

const treeItems: { icon: string; text: string; parent?: boolean; selected?: boolean }[] = [
  { icon: 'design', text: '设计项', parent: true },
  { icon: 'plane', text: 'RIGHT' },
  { icon: 'plane', text: 'TOP' },
  { icon: 'plane', text: 'FRONT' },
  { icon: 'csys', text: 'PRT_CSYS_DEF' },
  { icon: 'sketchItem', text: '草绘 1' },
  { icon: 'sketchItem', text: '草绘 2' },
  { icon: 'sweep', text: '扫描 1', parent: true, selected: true },
];

const layerItems: [text: string, parent: boolean, flat?: boolean][] = [
  ['01___PRT_ALL_DTM_PLN', true],
  ['01___PRT_DEF_DTM_PLN', true, true],
  ['02___PRT_ALL_AXES', false],
  ['03___PRT_ALL_CURVES', true],
  ['04___PRT_ALL_DTM_PNT', false],
  ['05___PRT_ALL_DTM_CSYS', true],
  ['05___PRT_DEF_DTM_CSYS', true, true],
  ['06___PRT_ALL_SURFS', true],
];

const SidePanel = () => (
  <Side>
    <PanelTabs>
      <PanelTab $active aria-label="模型树"><Icon name="treeTab" /></PanelTab>
      <PanelTab aria-label="文件夹浏览器"><Icon name="folders" /></PanelTab>
    </PanelTabs>
    <ToolRow>
      <Tool $w={15} aria-label="折叠"><BigCaret /></Tool>
      <Tool $w={20} aria-label="模型"><Icon name="greenCube" /></Tool>
      <Grip />
      <Tool aria-label="全部展开"><Icon name="listExpand" /></Tool>
      <Tool aria-label="全部折叠"><Icon name="listCollapse" /></Tool>
      <Tool $on aria-label="显示列"><Icon name="columnsEye" /></Tool>
      <Rule />
      <Tool aria-label="新建组"><Icon name="newGroup" /></Tool>
      <Rule />
      <Tool aria-label="树过滤器"><Icon name="treeFilter" /></Tool>
      <Tool aria-label="树列"><Icon name="columnsPage" /></Tool>
      <Rule />
      <Push />
      <Tool $w={20} aria-label="更多">»</Tool>
      <Tool aria-label="设置"><Icon name="settings" /></Tool>
    </ToolRow>
    <SearchRow>
      <Icon name="funnel" />
      <SearchBox>
        <input type="text" aria-label="搜索模型树" />
        <GlyphButton aria-label="清除">
          <svg width="10" height="10"><path d="M1 1l8 8M9 1L1 9" stroke="#999" strokeWidth="1.500" /></svg>
        </GlyphButton>
      </SearchBox>
      <GlyphButton aria-label="搜索选项"><Caret /></GlyphButton>
      <GlyphButton aria-label="添加">
        <svg width="12" height="12"><path d="M6 0v12M0 6h12" stroke="#a0a0a0" strokeWidth="3" /></svg>
      </GlyphButton>
    </SearchRow>
    <TreeWrap>
      <Tree $row={22}>
        <li><Root $gap={7}><Icon name="app" size={14} />PRT0002.PRT</Root></li>
        {treeItems.map((t) => (
          <li key={t.text}>
            <Gutter h={22} parent={t.parent} />
            <Icon name={t.icon} />
            <NodeText $gap={4} $selected={t.selected}>{t.text}</NodeText>
          </li>
        ))}
      </Tree>
    </TreeWrap>
    <InsertBar />
    <LayerPane>
      <Splitter />
      <ToolRow>
        <Tool $w={15} aria-label="折叠"><BigCaret /></Tool>
        <Tool $w={24} aria-label="层树"><Icon name="greenLayers" /></Tool>
        <Grip />
        <Tool aria-label="全部展开"><Icon name="listExpand" /></Tool>
        <Tool aria-label="全部折叠"><Icon name="listCollapse" /></Tool>
        <Rule />
        <Tool $on aria-label="显示层"><Icon name="layersEye" /></Tool>
        <Tool $on aria-label="显示项"><Icon name="layerCube" /></Tool>
        <Tool $on aria-label="选择层"><Icon name="layerSel" /></Tool>
        <Push />
        <Tool $w={20} aria-label="更多">»</Tool>
        <Tool $w={28} aria-label="层设置"><Icon name="layersPage" /></Tool>
        <Tool aria-label="设置"><Icon name="settings" /></Tool>
      </ToolRow>
      <Combo>
        <ComboCell $w={23}><Icon name="cursor" /></ComboCell>
        <select aria-label="活动层对象" disabled defaultValue="p">
          <option value="p">PRT0002.PRT</option>
        </select>
        <ComboCell $w={14}><Caret $muted /></ComboCell>
      </Combo>
      <LayerList>
        <Tree $row={20}>
          <li><Root $gap={8}><Icon name="layers" />层</Root></li>
          {layerItems.map(([text, parent, flat]) => (
            <li key={text}>
              <Gutter h={20} parent={parent} />
              <Icon name={flat ? 'layerFlat' : 'layerRule'} />
              <NodeText $gap={8}>{text}</NodeText>
            </li>
          ))}
        </Tree>
        <ScrollTrack>
          <ScrollPart $up aria-label="向上滚动"><Caret /></ScrollPart>
          <ScrollPart $thumb aria-label="滚动条" />
          <ScrollPart aria-label="向下滚动"><Caret /></ScrollPart>
        </ScrollTrack>
      </LayerList>
    </LayerPane>
  </Side>
);

/* ---------- graphics area ---------- */

const Viewport = styled.section`
  position: relative;
  flex: 1;
  min-width: 0;
  overflow: hidden;
  background: #fff;
`;

const Drawing = styled.svg`
  position: absolute;
  inset: 0;
  width: 100%;
  height: 100%;
`;

const FloatingBar = styled.div`
  position: absolute;
  top: 7px;
  left: 602px;
  display: flex;
  align-items: center;
  gap: 2px;
  height: 32px;
  padding: 0 3px;
  border: 1px solid #a0a4a6;
  background: #f8f9fb;
`;

const Note = styled.p<{ $x: number; $y: number }>`
  position: absolute;
  left: ${(p) => p.$x}px;
  top: ${(p) => p.$y}px;
  margin: 0;
  font: 500 17px/16px "Liberation Sans", "Noto Sans CJK SC", sans-serif;
  color: #000;
  white-space: nowrap;
`;

const NoteLine = styled.span`
  display: block;
  height: 16px;
`;

const Mono = styled.span`
  font: bold 15px/16px "Liberation Mono", monospace;
`;

const noteLines = [
  '切掉到平面视图中，右键选择编辑尺寸，把尺寸显示出来,通过观察再结合sin',
  '函数曲线和trajpar的定义，我得到的结论如下',
  'trajpar的取值范围是1到-1，sd3=6+2*sin(trajpar*360*14)，振幅是2，那',
  '么2*sin(trajpar*360)的值就是在2到-2这个区间变化，总的高度在这里就是',
  '在6+2到6-2这个范围内变化，即最高处为8，最低处为4，',
  'sd3=6+2*sin(trajpar*360*14)中的直线的尺寸6，也就是曲线从原点处往Y轴',
  '正方向的移动距离',
];

const splitRuns = (line: string) =>
  line.split(/([\x20-\x7e]+)/).filter(Boolean).map((run, i) =>
    /^[\x20-\x7e]/.test(run) ? <Mono key={i}>{run}</Mono> : run,
  );

const ORIGIN_X = 171;
const MID_Y = 310;
const BASE_Y = 471.5;
const PERIOD = 220.3;
const AMPLITUDE = 53.5;
const SPAN = PERIOD * 14;

const wave = Array.from({ length: Math.floor(SPAN / 3) + 1 }, (_, i) => {
  const dx = i * 3;
  return `${ORIGIN_X + dx} ${(MID_Y - AMPLITUDE * Math.sin((2 * Math.PI * dx) / PERIOD)).toFixed(1)}`;
}).join('L');

const Model = () => (
  <Drawing aria-label="模型">
    <rect x="149.500" y="232.500" width="3200" height="263" fill="#f7f4f0" stroke="#9a6833" shapeRendering="crispEdges" />
    <path d="M149 471.500h22" stroke="#9a6833" shapeRendering="crispEdges" />
    <text x="148" y="232" fontFamily="Lato, sans-serif" fontWeight="300" fontSize="16" fill="#8a5520">FRONT</text>
    <path d="M171 12v796" stroke="#ff80d0" strokeWidth="2" strokeDasharray="28 12 12 12" />
    <path d={`M${ORIGIN_X} ${BASE_Y}L${wave}V${BASE_Y}z`} fill="#f27ebc" />
    <path d={`M${wave}`} fill="none" stroke="#35c455" shapeRendering="crispEdges" />
    <path d={`M${ORIGIN_X} ${BASE_Y}h${SPAN}`} stroke="#35c455" shapeRendering="crispEdges" />
    <path d="M28 308.500L1328 319.500" stroke="#f00" strokeDasharray="18 6" shapeRendering="crispEdges" />
    <g fill="none" stroke="#000" shapeRendering="crispEdges">
      <path d="M224.500 257L229.500 468M338.500 366L341.500 473" strokeDasharray="18 6" />
      <path d="M231.500 261l14 21-12 25M231.500 318l29 76-30 74M181.500 480l27 51" />
    </g>
    <path d="M171 310v161" stroke="#ff9500" strokeWidth="2" />
    <path d="M171.500 370v101" stroke="#7fb43c" shapeRendering="crispEdges" />
    <path d="M169 320h1v3h-1zM172 320h1v3h-1zM169 459h3v2h-3z" fill="#00c" />
    <g fill="none" stroke="#ff9500" shapeRendering="crispEdges">
      <path d="M171.500 459.500h11v12h-11zM186.500 459.500h11v12h-11z" />
    </g>
    <text x="204" y="471" fontFamily="Lato, sans-serif" fontSize="14" fill="#ff9500">1</text>
    <rect x="161" y="368" width="20" height="22" fill="#fff" fillOpacity=".6" />
    <text x="171" y="385" textAnchor="middle" fontFamily="Lato, sans-serif" fontWeight="300" fontSize="16" fill="#1010c8">6</text>
    <path d="M166 467l10 10M176 467l-10 10" stroke="#ff80d0" strokeWidth="2" />
    <circle cx="171" cy="471.500" r="2.500" fill="#1a9a9a" stroke="#ffb000" strokeWidth="1.500" />
  </Drawing>
);

const Watermark = styled.div`
  position: absolute;
  right: 16px;
  bottom: 2px;
  width: 172px;
  font-family: "Noto Sans CJK SC", sans-serif;
`;

const MarkName = styled.div`
  display: flex;
  font-size: 41px;
  line-height: 44px;
  font-weight: 300;
  font-style: italic;
  color: #000;
  span { color: #ff6a34; }
`;

const MarkUrl = styled.a`
  display: block;
  padding-left: 4px;
  font: italic 18px/18px "Liberation Sans", sans-serif;
  color: #949494;
  text-decoration: none;
`;

const Flame = styled.svg`
  position: absolute;
  left: 66px;
  top: -15px;
`;

const viewTools: [icon: string, label: string, on?: boolean][] = [
  ['zoomFit', '重新调整'],
  ['zoomIn', '放大'],
  ['zoomOut', '缩小'],
  ['repaint', '重画'],
  ['shading', '渲染选项'],
  ['display', '显示样式'],
  ['savedViews', '已保存方向'],
  ['viewManager', '视图管理器'],
  ['perspective', '透视图'],
  ['section', '截面'],
  ['datum', '基准显示过滤器'],
  ['annotation', '注释显示', true],
  ['spin', '旋转中心', true],
  ['simulate', '仿真'],
  ['pause', '暂停'],
  ['flow', '流体'],
];

const Status = styled.footer`
  height: 6px;
  border-top: 1px solid ${c.line};
  background: #f4f8f9;
`;

const tabs = ['分析', '实时仿真', '注释', '工具', '视图', '柔性建模', '应用程序'];

export default function App() {
  return (
    <Shell>
      <GlobalStyle />
      <TitleBar>
        <Brand><Icon name="app" /><span>creo<sup>●</sup></span></Brand>
        <QuickButton aria-label="新建"><Icon name="blank" /></QuickButton>
        <QuickButton aria-label="打开"><Icon name="open" /></QuickButton>
        <QuickButton aria-label="保存"><Icon name="save" /></QuickButton>
        <QuickButton aria-label="撤消"><Icon name="undo" /></QuickButton>
        <QuickButton $slim aria-label="撤消列表"><Caret $muted /></QuickButton>
        <QuickButton aria-label="重做"><Icon name="redo" /></QuickButton>
        <QuickButton $slim aria-label="重做列表"><Caret $muted /></QuickButton>
        <QuickButton aria-label="重新生成"><Icon name="regen" /></QuickButton>
        <QuickButton aria-label="窗口"><Icon name="windows" /></QuickButton>
        <QuickButton $slim aria-label="窗口列表"><Caret /></QuickButton>
        <QuickButton aria-label="关闭"><Icon name="closeWin" /></QuickButton>
        <MoreButton aria-label="自定义"><Caret /></MoreButton>
        <WindowTitle>PRT0002 (活动的) - Creo Parametric 10.0</WindowTitle>
      </TitleBar>
      <TabBar>
        <Tab $kind="file">文件</Tab>
        <Tab $kind="active">模型</Tab>
        {tabs.map((t) => <Tab key={t}>{t}</Tab>)}
      </TabBar>
      <Ribbon>
        {groups.map((g) => <RibbonGroup key={g.name} {...g} />)}
      </Ribbon>
      <Workspace>
        <SidePanel />
        <Viewport>
          <Model />
          <FloatingBar>
            {viewTools.map(([icon, label, on]) => (
              <Tool key={icon} $on={on} aria-label={label}><Icon name={icon} /></Tool>
            ))}
          </FloatingBar>
          <Note $x={216} $y={99}>
            {noteLines.map((l) => <NoteLine key={l}>{splitRuns(l)}</NoteLine>)}
          </Note>
          <Note $x={213} $y={521}>原点</Note>
          <Watermark>
            <MarkName><span>野火</span>论坛</MarkName>
            <Flame width="20" height="44" viewBox="0 0 20 44" aria-hidden="true">
              <path d="M4 0c14 10 17 22 13 32-2 6-7 9-10 10l-5-4c8-8 5-18-2-28 4 2 8 6 9 12C11 13 9 6 4 0z" fill="#ff6a34" />
            </Flame>
            <MarkUrl href="#site">www.proewildfire.cn</MarkUrl>
          </Watermark>
        </Viewport>
      </Workspace>
      <Status />
    </Shell>
  );
}
